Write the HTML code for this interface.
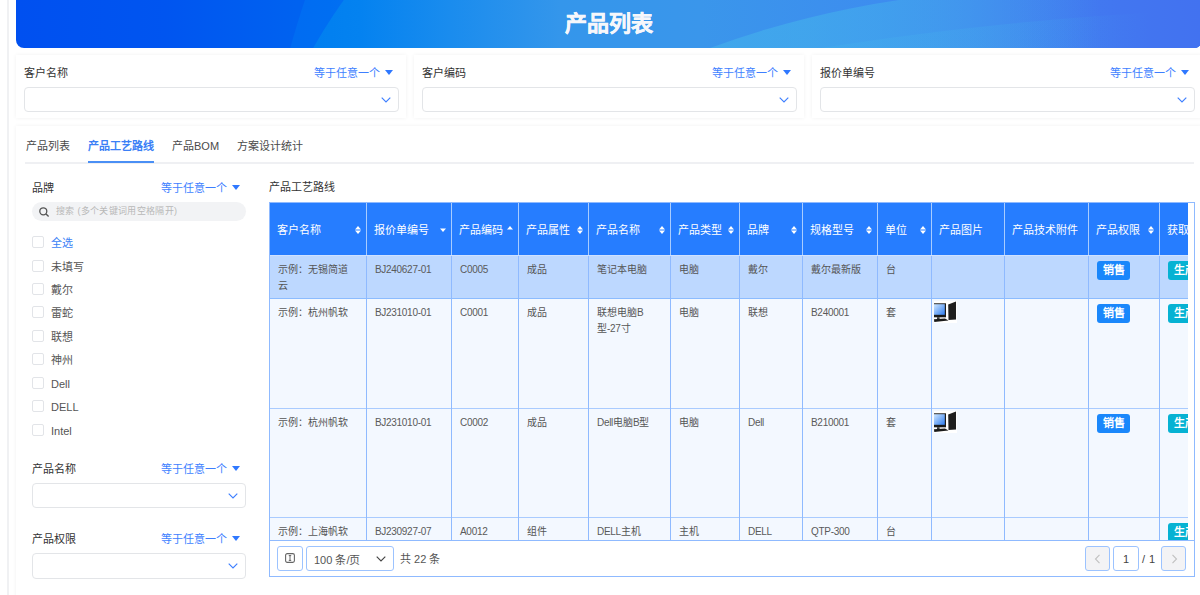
<!DOCTYPE html>
<html lang="zh-CN"><head><meta charset="utf-8">
<style>
*{box-sizing:border-box;margin:0;padding:0}
html,body{width:1200px;height:595px;overflow:hidden;background:#fff}
body{position:relative;font-family:"Liberation Sans",sans-serif;font-size:11px;color:#333}
.vline{position:absolute;left:7px;top:0;width:2px;height:595px;background:#f0f1f3}
.banner{position:absolute;left:16px;top:0;width:1186px;height:48px;border-radius:0 0 8px 8px;overflow:hidden;
 background:linear-gradient(90deg,#0050f0 0px,#0055f0 150px,#0062f0 280px)}
.banner .t{position:absolute;left:0;right:0;top:8.5px;text-align:center;color:#f6f7fb;font-weight:bold;font-size:22px;line-height:30px;-webkit-text-stroke:0.4px #f6f7fb}
.card{position:absolute;background:#fff;box-shadow:0 0 4px rgba(0,0,0,0.06)}
.flabel{position:absolute;font-size:11px;line-height:14px;color:#333;white-space:nowrap}
.fop{position:absolute;font-size:11px;line-height:14px;color:#3e7fff;white-space:nowrap}
.tri{display:inline-block;width:0;height:0;border-left:4px solid transparent;border-right:4px solid transparent;border-top:5px solid #2f78ff;vertical-align:middle;margin-left:5px;position:relative;top:-2px}
.inp{position:absolute;border:1px solid #e3e5e8;border-radius:4px;background:#fff}
.chev{position:absolute;right:7px;top:9px;width:10px;height:6px}
.tab{position:absolute;top:138px;font-size:11px;line-height:16px;color:#4a4a4a;white-space:nowrap}
.tab.on{color:#3b7ff6;font-weight:bold}
.search{position:absolute;left:32px;top:202px;width:214px;height:19px;border-radius:10px;background:#f2f3f5}
.ph{position:absolute;left:24px;top:3px;letter-spacing:0.33px;font-size:9px;line-height:12px;color:#b8b8b8;white-space:nowrap}
.cb{position:absolute;left:32px;width:12px;height:12px;border:1px solid #e2e4e8;border-radius:2px;background:#fff}
.cbl{position:absolute;left:51px;font-size:11px;line-height:14px;color:#555;white-space:nowrap}
.tbl{position:absolute;left:269px;top:202px;width:926px;height:375px;overflow:hidden;background:#fff}
.hd{position:absolute;top:0;height:53px;background:#267dff}
.hc{position:absolute;color:#fff;font-size:11px;line-height:14px;white-space:nowrap}
.vl{position:absolute;width:1px;background:#8fbaff}
.hl{position:absolute;height:1px;background:#a9cbff}
.cell{position:absolute;font-size:10px;line-height:16px;color:#555;white-space:nowrap}
.l{letter-spacing:-0.3px;color:#5a5a5a}
.tag{position:absolute;height:19px;border-radius:3px;color:#fff;font-size:11px;font-weight:bold;line-height:19px;text-align:center}
</style></head><body>
<div class="vline"></div>
<div class="banner"><div style="position:absolute;left:240px;top:-644px;width:1888px;height:1888px;border-radius:50%;background:linear-gradient(90deg,#006af2 0px,#006ef2 74px,#2a8cf0 344px,#3c8aef 644px,#4276f0 844px,#4272f0 944px)"></div><div style="position:absolute;left:231px;top:-213px;width:1026px;height:1026px;border-radius:50%;background:linear-gradient(90deg,#007ef0 53px,#0482f0 113px,#1a8cee 203px,#3496eb 313px,#3a96eb 453px,#3d8def 633px,#4182ef 753px,#4276f0 873px,#4272f0 953px)"></div><div style="position:absolute;left:75px;top:-10px;width:1890px;height:1890px;border-radius:50%;background:linear-gradient(90deg,rgba(68,178,236,0.6) 609px,rgba(68,178,236,0.6) 709px,rgba(68,178,236,0.4) 859px,rgba(68,178,236,0) 1009px)"></div><div style="position:absolute;left:-2038px;top:7px;width:6734px;height:6734px;border-radius:50%;background:linear-gradient(90deg,rgba(68,178,236,0.3) 2842px,rgba(68,178,236,0.2) 3022px,rgba(68,178,236,0) 3172px)"></div><div class="t">产品列表</div></div>
<div class="card" style="left:16px;top:55px;width:390px;height:63px">
  <div class="flabel" style="left:8px;top:11px">客户名称</div>
  <div class="fop" style="right:13px;top:11px">等于任意一个<span class="tri"></span></div>
  <div class="inp" style="left:8px;top:32px;width:375px;height:25px"><svg class="chev" viewBox="0 0 10 6"><path d="M0.7 0.7L5 5L9.3 0.7" fill="none" stroke="#3e7fff" stroke-width="1.15"/></svg></div>
</div>
<div class="card" style="left:414px;top:55px;width:390px;height:63px">
  <div class="flabel" style="left:8px;top:11px">客户编码</div>
  <div class="fop" style="right:13px;top:11px">等于任意一个<span class="tri"></span></div>
  <div class="inp" style="left:8px;top:32px;width:375px;height:25px"><svg class="chev" viewBox="0 0 10 6"><path d="M0.7 0.7L5 5L9.3 0.7" fill="none" stroke="#3e7fff" stroke-width="1.15"/></svg></div>
</div>
<div class="card" style="left:812px;top:55px;width:390px;height:63px">
  <div class="flabel" style="left:8px;top:11px">报价单编号</div>
  <div class="fop" style="right:13px;top:11px">等于任意一个<span class="tri"></span></div>
  <div class="inp" style="left:8px;top:32px;width:375px;height:25px"><svg class="chev" viewBox="0 0 10 6"><path d="M0.7 0.7L5 5L9.3 0.7" fill="none" stroke="#3e7fff" stroke-width="1.15"/></svg></div>
</div>
<div class="card" style="left:16px;top:126px;width:1186px;height:480px"></div>
<div class="tab" style="left:26px">产品列表</div>
<div class="tab on" style="left:88px">产品工艺路线</div>
<div class="tab" style="left:172px">产品BOM</div>
<div class="tab" style="left:237px">方案设计统计</div>
<div style="position:absolute;left:25px;top:162px;width:1169px;height:2px;background:#eff0f3"></div>
<div style="position:absolute;left:88px;top:161px;width:66px;height:2px;background:#4a8ff5"></div>
<div class="flabel" style="left:32px;top:181px">品牌</div><div class="fop" style="left:161px;top:181px">等于任意一个<span class="tri"></span></div>
<div class="search"><svg style="position:absolute;left:7px;top:5px" width="11" height="10" viewBox="0 0 11 10"><circle cx="4.3" cy="4.3" r="3.5" fill="none" stroke="#555" stroke-width="1.3"/><path d="M6.8 6.8L9.6 9.4" stroke="#555" stroke-width="1.4"/></svg><div class="ph">搜索 (多个关键词用空格隔开)</div></div>
<div class="cb" style="top:236px"></div><div class="cbl" style="top:236px;color:#3b7ff6;">全选</div>
<div class="cb" style="top:260px"></div><div class="cbl" style="top:260px;">未填写</div>
<div class="cb" style="top:283px"></div><div class="cbl" style="top:283px;">戴尔</div>
<div class="cb" style="top:306px"></div><div class="cbl" style="top:306px;">雷蛇</div>
<div class="cb" style="top:330px"></div><div class="cbl" style="top:330px;">联想</div>
<div class="cb" style="top:353px"></div><div class="cbl" style="top:353px;">神州</div>
<div class="cb" style="top:377px"></div><div class="cbl" style="top:377px;">Dell</div>
<div class="cb" style="top:400px"></div><div class="cbl" style="top:400px;">DELL</div>
<div class="cb" style="top:424px"></div><div class="cbl" style="top:424px;">Intel</div>
<div class="flabel" style="left:32px;top:462px">产品名称</div><div class="fop" style="left:161px;top:462px">等于任意一个<span class="tri"></span></div>
<div class="inp" style="left:32px;top:483px;width:214px;height:25px"><svg class="chev" viewBox="0 0 10 6"><path d="M0.7 0.7L5 5L9.3 0.7" fill="none" stroke="#3e7fff" stroke-width="1.15"/></svg></div>
<div class="flabel" style="left:32px;top:532px">产品权限</div><div class="fop" style="left:161px;top:532px">等于任意一个<span class="tri"></span></div>
<div class="inp" style="left:32px;top:553px;width:214px;height:26px"><svg class="chev" viewBox="0 0 10 6"><path d="M0.7 0.7L5 5L9.3 0.7" fill="none" stroke="#3e7fff" stroke-width="1.15"/></svg></div>
<div class="flabel" style="left:269px;top:180px">产品工艺路线</div>
<div class="tbl"><div style="position:absolute;left:1px;top:0px;width:918px;height:53px;background:#267dff"></div>
<div style="position:absolute;left:1px;top:53px;width:918px;height:1px;background:#cfe1ff"></div>
<div style="position:absolute;left:1px;top:54px;width:918px;height:42px;background:#bdd8ff"></div>
<div style="position:absolute;left:1px;top:97px;width:918px;height:241px;background:#f3f8ff"></div>
<div style="position:absolute;left:1px;top:96px;width:918px;height:1px;background:#8cbcff"></div>
<div style="position:absolute;left:1px;top:206px;width:918px;height:1px;background:#a9cbff"></div>
<div style="position:absolute;left:1px;top:315px;width:918px;height:1px;background:#a9cbff"></div>
<div style="position:absolute;left:0px;top:338px;width:926px;height:1px;background:#8fbaff"></div>
<div style="position:absolute;left:97px;top:1px;width:1px;height:52px;background:#a8ccff"></div>
<div style="position:absolute;left:97px;top:54px;width:1px;height:284px;background:#8fbaff"></div>
<div style="position:absolute;left:182px;top:1px;width:1px;height:52px;background:#a8ccff"></div>
<div style="position:absolute;left:182px;top:54px;width:1px;height:284px;background:#8fbaff"></div>
<div style="position:absolute;left:249px;top:1px;width:1px;height:52px;background:#a8ccff"></div>
<div style="position:absolute;left:249px;top:54px;width:1px;height:284px;background:#8fbaff"></div>
<div style="position:absolute;left:319px;top:1px;width:1px;height:52px;background:#a8ccff"></div>
<div style="position:absolute;left:319px;top:54px;width:1px;height:284px;background:#8fbaff"></div>
<div style="position:absolute;left:401px;top:1px;width:1px;height:52px;background:#a8ccff"></div>
<div style="position:absolute;left:401px;top:54px;width:1px;height:284px;background:#8fbaff"></div>
<div style="position:absolute;left:470px;top:1px;width:1px;height:52px;background:#a8ccff"></div>
<div style="position:absolute;left:470px;top:54px;width:1px;height:284px;background:#8fbaff"></div>
<div style="position:absolute;left:533px;top:1px;width:1px;height:52px;background:#a8ccff"></div>
<div style="position:absolute;left:533px;top:54px;width:1px;height:284px;background:#8fbaff"></div>
<div style="position:absolute;left:608px;top:1px;width:1px;height:52px;background:#a8ccff"></div>
<div style="position:absolute;left:608px;top:54px;width:1px;height:284px;background:#8fbaff"></div>
<div style="position:absolute;left:662px;top:1px;width:1px;height:52px;background:#a8ccff"></div>
<div style="position:absolute;left:662px;top:54px;width:1px;height:284px;background:#8fbaff"></div>
<div style="position:absolute;left:735px;top:1px;width:1px;height:52px;background:#a8ccff"></div>
<div style="position:absolute;left:735px;top:54px;width:1px;height:284px;background:#8fbaff"></div>
<div style="position:absolute;left:819px;top:1px;width:1px;height:52px;background:#a8ccff"></div>
<div style="position:absolute;left:819px;top:54px;width:1px;height:284px;background:#8fbaff"></div>
<div style="position:absolute;left:890px;top:1px;width:1px;height:52px;background:#a8ccff"></div>
<div style="position:absolute;left:890px;top:54px;width:1px;height:284px;background:#8fbaff"></div>
<div class="hc" style="left:8px;top:21px">客户名称</div>
<svg style="position:absolute;left:86px;top:24px" width="6" height="8" viewBox="0 0 6 8"><path d="M0 3.4L3 0L6 3.4Z" fill="#fff"/><path d="M0 4.6L6 4.6L3 8Z" fill="#fff"/></svg>
<div class="hc" style="left:105px;top:21px">报价单编号</div>
<svg style="position:absolute;left:171px;top:22px" width="6" height="8" viewBox="0 0 6 8"><path d="M0 4.6L6 4.6L3 8Z" fill="#fff"/></svg>
<div class="hc" style="left:190px;top:21px">产品编码</div>
<svg style="position:absolute;left:238px;top:24px" width="6" height="8" viewBox="0 0 6 8"><path d="M0 3.4L3 0L6 3.4Z" fill="#fff"/></svg>
<div class="hc" style="left:257px;top:21px">产品属性</div>
<svg style="position:absolute;left:308px;top:24px" width="6" height="8" viewBox="0 0 6 8"><path d="M0 3.4L3 0L6 3.4Z" fill="#fff"/><path d="M0 4.6L6 4.6L3 8Z" fill="#fff"/></svg>
<div class="hc" style="left:327px;top:21px">产品名称</div>
<svg style="position:absolute;left:390px;top:24px" width="6" height="8" viewBox="0 0 6 8"><path d="M0 3.4L3 0L6 3.4Z" fill="#fff"/><path d="M0 4.6L6 4.6L3 8Z" fill="#fff"/></svg>
<div class="hc" style="left:409px;top:21px">产品类型</div>
<svg style="position:absolute;left:459px;top:24px" width="6" height="8" viewBox="0 0 6 8"><path d="M0 3.4L3 0L6 3.4Z" fill="#fff"/><path d="M0 4.6L6 4.6L3 8Z" fill="#fff"/></svg>
<div class="hc" style="left:478px;top:21px">品牌</div>
<svg style="position:absolute;left:522px;top:24px" width="6" height="8" viewBox="0 0 6 8"><path d="M0 3.4L3 0L6 3.4Z" fill="#fff"/><path d="M0 4.6L6 4.6L3 8Z" fill="#fff"/></svg>
<div class="hc" style="left:541px;top:21px">规格型号</div>
<svg style="position:absolute;left:597px;top:24px" width="6" height="8" viewBox="0 0 6 8"><path d="M0 3.4L3 0L6 3.4Z" fill="#fff"/><path d="M0 4.6L6 4.6L3 8Z" fill="#fff"/></svg>
<div class="hc" style="left:616px;top:21px">单位</div>
<svg style="position:absolute;left:651px;top:24px" width="6" height="8" viewBox="0 0 6 8"><path d="M0 3.4L3 0L6 3.4Z" fill="#fff"/><path d="M0 4.6L6 4.6L3 8Z" fill="#fff"/></svg>
<div class="hc" style="left:670px;top:21px">产品图片</div>
<div class="hc" style="left:743px;top:21px">产品技术附件</div>
<div class="hc" style="left:827px;top:21px">产品权限</div>
<svg style="position:absolute;left:879px;top:24px" width="6" height="8" viewBox="0 0 6 8"><path d="M0 3.4L3 0L6 3.4Z" fill="#fff"/><path d="M0 4.6L6 4.6L3 8Z" fill="#fff"/></svg>
<div class="hc" style="left:898px;top:21px">获取</div>
<svg style="position:absolute;left:960px;top:24px" width="6" height="8" viewBox="0 0 6 8"><path d="M0 3.4L3 0L6 3.4Z" fill="#fff"/><path d="M0 4.6L6 4.6L3 8Z" fill="#fff"/></svg>
<div class="cell" style="left:9px;top:60px">示例：无锡简道<br>云</div>
<div class="cell" style="left:106px;top:60px"><span class="l">BJ240627-01</span></div>
<div class="cell" style="left:191px;top:60px"><span class="l">C0005</span></div>
<div class="cell" style="left:258px;top:60px">成品</div>
<div class="cell" style="left:328px;top:60px">笔记本电脑</div>
<div class="cell" style="left:410px;top:60px">电脑</div>
<div class="cell" style="left:479px;top:60px">戴尔</div>
<div class="cell" style="left:542px;top:60px">戴尔最新版</div>
<div class="cell" style="left:617px;top:60px">台</div>
<div class="tag" style="left:828px;top:59px;width:33px;background:#1a87fb">销售</div>
<div class="tag" style="left:899px;top:59px;width:33px;background:#06b2d3">生产</div>
<div class="cell" style="left:9px;top:103px">示例：杭州帆软</div>
<div class="cell" style="left:106px;top:103px"><span class="l">BJ231010-01</span></div>
<div class="cell" style="left:191px;top:103px"><span class="l">C0001</span></div>
<div class="cell" style="left:258px;top:103px">成品</div>
<div class="cell" style="left:328px;top:103px">联想电脑<span class="l">B</span><br>型<span class="l">-27</span>寸</div>
<div class="cell" style="left:410px;top:103px">电脑</div>
<div class="cell" style="left:479px;top:103px">联想</div>
<div class="cell" style="left:542px;top:103px"><span class="l">B240001</span></div>
<div class="cell" style="left:617px;top:103px">套</div>
<div style="position:absolute;left:665px;top:99px;width:23px;height:22px"><svg width="23" height="22" viewBox="0 0 23 22"><rect x="0" y="0" width="23" height="22" fill="#fff"/><rect x="0" y="2.3" width="12" height="14" fill="#1a1a1a"/><defs><linearGradient id="sg" x1="0" y1="0" x2="1" y2="1"><stop offset="0" stop-color="#cfe6ff"/><stop offset="1" stop-color="#2f7df0"/></linearGradient></defs><rect x="0" y="3.2" width="10.8" height="10.6" fill="url(#sg)"/><rect x="3" y="16.3" width="2.6" height="1.6" fill="#222"/><path d="M0 18.2L11 17.6L14.5 19.6L0.3 21Z" fill="#1a1a1a"/><path d="M14.2 3.5L22 0.6L22 18.5L14.5 19Z" fill="#1e1e1e"/></svg></div>
<div class="tag" style="left:828px;top:102px;width:33px;background:#1a87fb">销售</div>
<div class="tag" style="left:899px;top:102px;width:33px;background:#06b2d3">生产</div>
<div class="cell" style="left:9px;top:213px">示例：杭州帆软</div>
<div class="cell" style="left:106px;top:213px"><span class="l">BJ231010-01</span></div>
<div class="cell" style="left:191px;top:213px"><span class="l">C0002</span></div>
<div class="cell" style="left:258px;top:213px">成品</div>
<div class="cell" style="left:328px;top:213px"><span class="l">Dell</span>电脑<span class="l">B</span>型</div>
<div class="cell" style="left:410px;top:213px">电脑</div>
<div class="cell" style="left:479px;top:213px"><span class="l">Dell</span></div>
<div class="cell" style="left:542px;top:213px"><span class="l">B210001</span></div>
<div class="cell" style="left:617px;top:213px">套</div>
<div style="position:absolute;left:665px;top:209px;width:23px;height:22px"><svg width="23" height="22" viewBox="0 0 23 22"><rect x="0" y="0" width="23" height="22" fill="#fff"/><rect x="0" y="2.3" width="12" height="14" fill="#1a1a1a"/><defs><linearGradient id="sg" x1="0" y1="0" x2="1" y2="1"><stop offset="0" stop-color="#cfe6ff"/><stop offset="1" stop-color="#2f7df0"/></linearGradient></defs><rect x="0" y="3.2" width="10.8" height="10.6" fill="url(#sg)"/><rect x="3" y="16.3" width="2.6" height="1.6" fill="#222"/><path d="M0 18.2L11 17.6L14.5 19.6L0.3 21Z" fill="#1a1a1a"/><path d="M14.2 3.5L22 0.6L22 18.5L14.5 19Z" fill="#1e1e1e"/></svg></div>
<div class="tag" style="left:828px;top:212px;width:33px;background:#1a87fb">销售</div>
<div class="tag" style="left:899px;top:212px;width:33px;background:#06b2d3">生产</div>
<div class="cell" style="left:9px;top:322px">示例：上海帆软</div>
<div class="cell" style="left:106px;top:322px"><span class="l">BJ230927-07</span></div>
<div class="cell" style="left:191px;top:322px"><span class="l">A0012</span></div>
<div class="cell" style="left:258px;top:322px">组件</div>
<div class="cell" style="left:328px;top:322px"><span class="l">DELL</span>主机</div>
<div class="cell" style="left:410px;top:322px">主机</div>
<div class="cell" style="left:479px;top:322px"><span class="l">DELL</span></div>
<div class="cell" style="left:542px;top:322px"><span class="l">QTP-300</span></div>
<div class="cell" style="left:617px;top:322px">台</div>
<div class="tag" style="left:899px;top:321px;width:33px;background:#06b2d3">生产</div>
<div style="position:absolute;left:0px;top:338px;width:926px;height:37px;background:#fff"></div>
<div style="position:absolute;left:0px;top:338px;width:926px;height:1px;background:#8fbaff"></div>
<div style="position:absolute;left:919px;top:0px;width:6px;height:338px;background:#fff"></div>
<div style="position:absolute;left:0px;top:0px;width:926px;height:375px;border:1px solid #8fbaff;box-sizing:border-box"></div>
<div style="position:absolute;left:8px;top:344px;width:26px;height:25px;border:1px solid #9cc3ff;border-radius:3px"></div>
<svg style="position:absolute;left:16px;top:351px" width="10" height="10" viewBox="0 0 10 10"><rect x="0.6" y="0.6" width="8.8" height="8.8" rx="1.6" fill="none" stroke="#666" stroke-width="1.1"/><path d="M3.8 2.6H6.2M5 2.6V7.4M3.8 7.4H6.2" stroke="#555" stroke-width="0.9" fill="none"/></svg>
<div style="position:absolute;left:37px;top:344px;width:88px;height:25px;border:1px solid #9cc3ff;border-radius:3px"><span style="position:absolute;left:7px;top:6px;font-size:11px;line-height:15px;color:#555">100 条/页</span><svg class="chev" viewBox="0 0 10 6"><path d="M0.7 0.7L5 5L9.3 0.7" fill="none" stroke="#444" stroke-width="1.15"/></svg></div>
<div style="position:absolute;left:131px;top:350px;font-size:11px;line-height:15px;color:#555">共 22 条</div>
<div style="position:absolute;left:816px;top:344px;width:25px;height:25px;border:1px solid #9cc3ff;border-radius:3px;background:#f3f3f5"></div>
<svg style="position:absolute;left:825px;top:352px" width="7" height="10" viewBox="0 0 7 10"><path d="M5.5 0.8L1.5 5L5.5 9.2" fill="none" stroke="#c0c0c0" stroke-width="1.1"/></svg>
<div style="position:absolute;left:844px;top:344px;width:26px;height:25px;border:1px solid #9cc3ff;border-radius:3px;text-align:center;font-size:11px;line-height:25px;color:#444">1</div>
<div style="position:absolute;left:873px;top:350px;font-size:11px;line-height:15px;color:#444;word-spacing:1px">/ 1</div>
<div style="position:absolute;left:892px;top:344px;width:25px;height:25px;border:1px solid #9cc3ff;border-radius:3px;background:#f3f3f5"></div>
<svg style="position:absolute;left:902px;top:352px" width="7" height="10" viewBox="0 0 7 10"><path d="M1.5 0.8L5.5 5L1.5 9.2" fill="none" stroke="#c0c0c0" stroke-width="1.1"/></svg></div>
</body></html>
